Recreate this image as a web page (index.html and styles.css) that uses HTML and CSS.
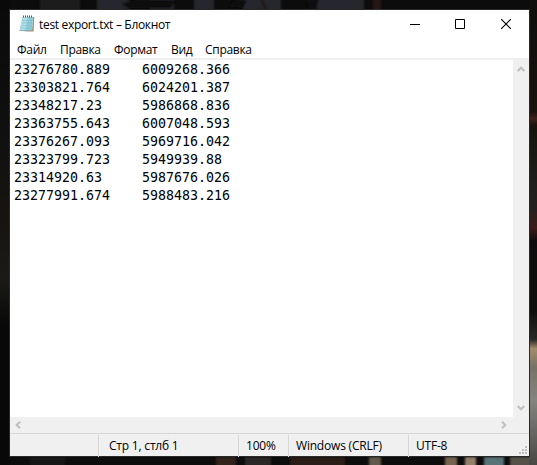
FILE: index.html
```html
<!DOCTYPE html>
<html lang="ru">
<head>
<meta charset="utf-8">
<title>test export.txt – Блокнот</title>
<link rel="stylesheet" href="styles.css">
</head>
<body>
<svg class="wallpaper" viewBox="0 0 537 465" aria-hidden="true">
  <defs>
    <filter id="soft"><feGaussianBlur stdDeviation="1.3"/></filter>
    <linearGradient id="right" x1="0" y1="0" x2="0" y2="1">
      <stop offset="0" stop-color="#100d0c"/><stop offset=".24" stop-color="#19130d"/>
      <stop offset=".255" stop-color="#3a211a"/><stop offset=".27" stop-color="#16130c"/>
      <stop offset=".38" stop-color="#201c19"/><stop offset=".45" stop-color="#25211e"/>
      <stop offset=".49" stop-color="#3c1d19"/><stop offset=".52" stop-color="#0d0b0b"/>
      <stop offset=".67" stop-color="#10100e"/><stop offset=".73" stop-color="#292824"/>
      <stop offset=".75" stop-color="#a18c6c"/><stop offset=".79" stop-color="#777268"/>
      <stop offset=".86" stop-color="#85847f"/><stop offset="1" stop-color="#494743"/>
    </linearGradient>
    <linearGradient id="left" x1="0" y1="0" x2="0" y2="1">
      <stop offset="0" stop-color="#090909"/><stop offset=".32" stop-color="#111"/>
      <stop offset=".46" stop-color="#17140f"/><stop offset=".6" stop-color="#1b1a16"/>
      <stop offset=".7" stop-color="#080808"/><stop offset="1" stop-color="#080808"/>
    </linearGradient>
  </defs>
  <rect width="537" height="465" fill="#0d0c0c"/>
  <rect width="10" height="465" fill="url(#left)"/>
  <g filter="url(#soft)">
    <path fill="#1d1b1b" d="M40 -4h40v14H40z"/>
    <path fill="#26282e" d="M97-4h32v14H97zm53 0h24v14h-24zm44 0h20v14h-20zm49 0h38v14h-38zm74 0h47v14h-47z"/>
    <path fill="#211b19" d="M260 0h4l4 10h-4z"/>
    <path fill="#261713" d="M373-4h8v14h-8z"/>
    <path fill="#0a0a0b" d="M121 4l14-4h40l-4 8h-43zm107 3 8-7h11l-4 8zm79-7h12l-5 10h-6z"/>
    <path fill="#171717" d="M30 457h35v12H30z"/>
    <path fill="#33211d" d="M216 457h20v12h-20z"/>
    <path fill="#292725" d="M245 457h26v12h-26z"/>
    <path fill="#2b1b19" d="M290 457h55v12h-55z"/>
    <path fill="#62594c" d="M369 457h12v12h-12z"/>
    <path fill="#746450" d="M445 457h12v12h-12z"/>
    <path fill="#93806a" d="M465 457h11v12h-11z"/>
    <path fill="#587375" d="M484 457h20v12h-20z"/>
    <path fill="#555148" d="M510 457h27v12h-27z"/>
  </g>
  <rect x="529" width="8" height="465" fill="url(#right)"/>
</svg>
<main class="window">
  <header class="titlebar">
    <svg class="app-icon" width="17" height="18" viewBox="0 0 17 18">
      <path d="M14 2h1.2l-.5 14.5H4l9-1z" fill="#a39474"/>
      <path d="M3.4 2H14l-1 13.8H.7z" fill="#8fcbd8"/>
      <path d="M3.4 2H9L6 15.8H.7z" fill="#b5e0e8"/>
      <path d="M3 5.5h10.5M2.6 8h10.6M2.2 10.5H13M1.7 13h11" stroke="#6db6c7" stroke-width=".5"/>
      <path d="M.6 15.5H13" stroke="#6a98a3" stroke-width=".7"/>
      <path d="M4 1.5h10" stroke="#4d5c60" stroke-width="2" stroke-dasharray="1 1"/>
    </svg>
    <h1 class="title">test export.txt – Блокнот</h1>
    <div class="controls">
      <svg class="minimize" width="10" height="10" viewBox="0 0 10 10"><path d="M0 5.5h10" stroke="#000"/></svg>
      <svg width="10" height="10" viewBox="0 0 10 10"><path d="M.5.5h9v9h-9z" fill="none" stroke="#000"/></svg>
      <svg width="10" height="10" viewBox="0 0 10 10"><path d="M0 0l10 10M10 0L0 10" stroke="#000" stroke-width="1.1"/></svg>
    </div>
  </header>
  <nav class="menu">
    <span>Файл</span><span>Правка</span><span>Формат</span><span>Вид</span><span>Справка</span>
  </nav>
  <section class="editor">
<pre class="text">23276780.889    6009268.366
23303821.764    6024201.387
23348217.23     5986868.836
23363755.643    6007048.593
23376267.093    5969716.042
23323799.723    5949939.88
23314920.63     5987676.026
23277991.674    5988483.216</pre>
    <div class="vscroll">
      <svg width="8" height="6" viewBox="0 0 8 6"><path d="M.7 5L4 1.7 7.3 5"/></svg>
      <svg width="8" height="6" viewBox="0 0 8 6"><path d="M.7 1L4 4.3 7.3 1"/></svg>
    </div>
  </section>
  <div class="hscroll">
    <svg width="6" height="8" viewBox="0 0 6 8"><path d="M5 .7L1.7 4 5 7.3"/></svg>
    <svg width="6" height="8" viewBox="0 0 6 8"><path d="M1 .7L4.3 4 1 7.3"/></svg>
  </div>
  <footer class="status">
    <span></span><span class="s-pos">Стр 1, стлб 1</span><span class="s-zoom">100%</span><span class="s-eol">Windows (CRLF)</span><span class="s-enc">UTF-8</span>
    <svg class="grip" width="8" height="8" viewBox="0 0 8 8"><path d="M6 0h2v2H6zM3 3h2v2H3zm3 0h2v2H6zM0 6h2v2H0zm3 0h2v2H3zm3 0h2v2H6z" fill="#bdbdbd"/></svg>
  </footer>
</main>
</body>
</html>
```
FILE: styles.css
```css
* { box-sizing: border-box; }
body { margin: 0; width: 537px; height: 465px; overflow: hidden; padding: 10px 8px 9px 10px; background: #0b0a0a; font: 12px/16px "Open Sans", "Noto Sans", sans-serif; color: #000; }
.wallpaper { position: absolute; inset: 0; width: 537px; height: 465px; }
.window { position: relative; width: 519px; height: 446px; display: flex; flex-direction: column; background: #fff; box-shadow: 0 0 0 1px #292929; }
.titlebar { height: 30px; display: flex; align-items: center; padding: 0 18px 0 9px; }
.app-icon { margin-top: -3px; }
.title { margin: 0 0 0 3px; font-size: 12px; font-weight: 400; line-height: 16px; letter-spacing: -.32px; white-space: nowrap; }
.controls { display: flex; gap: 36px; margin-left: auto; margin-top: -2px; }
.controls svg { display: block; }
.controls .minimize { margin-right: -1px; }
.menu { height: 20px; display: grid; grid-template-columns: 43px 54px 57px 34px 60px; padding-left: 7px; border-bottom: 2px solid #f0f0f0; line-height: 19px; letter-spacing: -.3px; white-space: nowrap; }
.editor { height: 357px; display: flex; }
.text { flex: 1; margin: 0; padding: 1px 4px 0; font: 13.29px/18px "DejaVu Sans Mono", monospace; }
.vscroll { width: 16px; background: #f0f0f0; display: flex; flex-direction: column; justify-content: space-between; align-items: center; padding: 6px 0; }
.hscroll { height: 16px; background: #f0f0f0; display: flex; justify-content: space-between; align-items: center; padding: 0 22px 0 5px; }
.vscroll path, .hscroll path { fill: none; stroke: #bfbfbf; stroke-width: 2; }
.status { position: relative; height: 23px; display: grid; grid-template-columns: 88px 140px 50px 120px 1fr; padding: 1px 0; background: #f0f0f0; border-top: 1px solid #d7d7d7; line-height: 22px; letter-spacing: -.2px; white-space: nowrap; }
.status span + span { border-left: 1px solid #d7d7d7; }
.s-pos { padding-left: 10px; }
.s-zoom, .s-eol, .s-enc { padding-left: 7px; }
.grip { position: absolute; right: 2px; bottom: 2px; }
```
